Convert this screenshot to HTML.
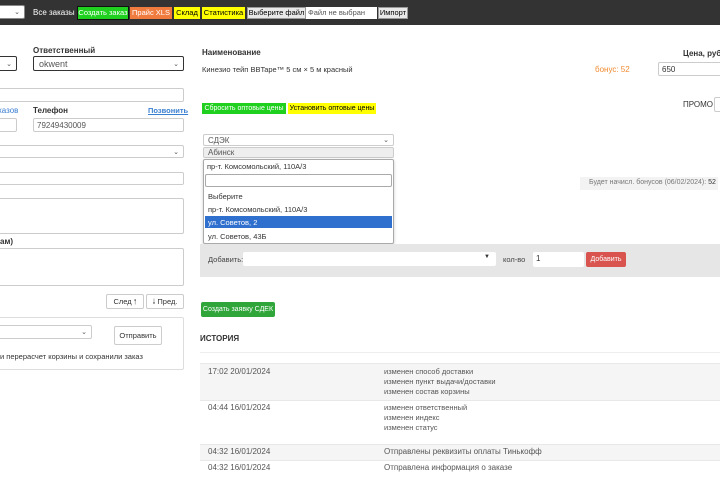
<!DOCTYPE html>
<html><head><meta charset="utf-8"><style>
*{box-sizing:border-box;margin:0;padding:0}
body{width:720px;height:480px;overflow:hidden;background:#fff;font-family:"Liberation Sans","Noto Sans CJK SC",sans-serif;font-size:8px;color:#333;position:relative}
.a{position:absolute;white-space:nowrap}
.bar{left:0;top:0;width:720px;height:25px;background:#333}
.in{position:absolute;background:#fff;border:1px solid #ccc;border-radius:2px}
.b{font-weight:bold;color:#333}
.btn{position:absolute;font-size:7.5px;line-height:12px;text-align:center;white-space:nowrap;overflow:hidden}
.chev{position:absolute;right:4px;top:50%;margin-top:-4px;font-size:7px;color:#555}
.row{position:absolute;left:200px;width:520px}
</style></head><body>
<div class="a bar"></div>
<div class="in" style="left:-4px;top:5px;width:29px;height:14px;border-color:#888"><span class="chev">&#8964;</span></div>
<div class="a" style="left:33px;top:8px;color:#fff">Все заказы</div>
<div class="btn" style="left:77px;top:6px;width:52px;height:14px;background:#1fd01f;color:#fff;border:1px solid #111">Создать заказ</div>
<div class="btn" style="left:130px;top:7px;width:42px;height:12px;background:#f07b3f;color:#fff">Прайс XLS</div>
<div class="btn" style="left:174px;top:7px;width:26px;height:12px;background:#ff0;color:#000">Склад</div>
<div class="btn" style="left:202px;top:7px;width:43px;height:12px;background:#ff0;color:#000">Статистика</div>
<div class="btn" style="left:247px;top:7px;width:59px;height:12px;background:#e8e8e8;color:#000;border:1px solid #999;line-height:10px">Выберите файл</div>
<div class="a" style="left:306px;top:7px;width:71px;height:12px;background:#fff;color:#555;padding-left:2px;line-height:12px;font-size:7.5px">Файл не выбран</div>
<div class="btn" style="left:378px;top:7px;width:30px;height:12px;background:#e8e8e8;color:#000;border:1px solid #999;line-height:10px">Импорт</div>

<!-- left -->
<div class="in" style="left:-4px;top:56px;width:21px;height:15px;border:1px solid #333"><span class="chev">&#8964;</span></div>
<div class="a b" style="left:33px;top:46px">Ответственный</div>
<div class="in" style="left:33px;top:56px;width:151px;height:15px;border:1.5px solid #333;padding:2px 5px;color:#555;font-size:9px">okwent<span class="chev">&#8964;</span></div>
<div class="in" style="left:-4px;top:88px;width:188px;height:14px"></div>
<div class="a" style="left:-10px;top:106px;color:#3a7fd0">заказов</div>
<div class="a b" style="left:33px;top:106px">Телефон</div>
<div class="a" style="left:148px;top:106px;color:#3a7fd0;text-decoration:underline;font-weight:bold;font-size:7.5px">Позвонить</div>
<div class="in" style="left:-4px;top:118px;width:21px;height:14px"></div>
<div class="in" style="left:33px;top:118px;width:151px;height:14px;padding:2px 3px;color:#555">79249430009</div>
<div class="in" style="left:-4px;top:145px;width:188px;height:13px"><span class="chev">&#8964;</span></div>
<div class="in" style="left:-4px;top:172px;width:188px;height:13px"></div>
<div class="in" style="left:-4px;top:198px;width:188px;height:36px"></div>
<div class="a b" style="left:0;top:237px">ам)</div>
<div class="in" style="left:-4px;top:248px;width:188px;height:38px"></div>
<div class="btn in" style="left:106px;top:294px;width:38px;height:15px;line-height:13px">След &#129041;</div>
<div class="btn in" style="left:146px;top:294px;width:38px;height:15px;line-height:13px">&#129043; Пред.</div>
<div class="in" style="left:-4px;top:317px;width:188px;height:53px;border-color:#ddd"></div>
<div class="in" style="left:-4px;top:325px;width:96px;height:14px"><span class="chev">&#8964;</span></div>
<div class="btn in" style="left:114px;top:326px;width:48px;height:19px;line-height:17px">Отправить</div>
<div class="a" style="left:0;top:352px;font-size:7.5px">и перерасчет корзины и сохранили заказ</div>

<!-- right -->
<div class="a b" style="left:202px;top:48px">Наименование</div>
<div class="a" style="left:202px;top:65px;font-size:7.5px">Кинезио тейп BBTape™ 5 см × 5 м красный</div>
<div class="a" style="left:595px;top:65px;color:#f08a30">бонус: 52</div>
<div class="a b" style="left:683px;top:49px">Цена, руб.</div>
<div class="in" style="left:658px;top:62px;width:70px;height:14px;padding:2px 3px">650</div>
<div class="btn" style="left:202px;top:103px;width:84px;height:11px;background:#1fd01f;color:#fff;line-height:11px;font-size:7px">Сбросить оптовые цены</div>
<div class="btn" style="left:288px;top:103px;width:88px;height:11px;background:#ff0;color:#000;line-height:11px;font-size:7px">Установить оптовые цены</div>
<div class="a" style="left:683px;top:100px">ПРОМО</div>
<div class="in" style="left:714px;top:97px;width:20px;height:15px"></div>

<div class="in" style="left:203px;top:134px;width:191px;height:12px;padding:1px 4px;color:#555">СДЭК<span class="chev">&#8964;</span></div>
<div class="in" style="left:203px;top:147px;width:191px;height:11px;padding:0 4px;color:#555;background:#eee;line-height:10px">Абинск</div>
<div class="in" style="left:203px;top:159px;width:191px;height:85px;border-color:#aaa;box-shadow:0 1px 3px rgba(0,0,0,.2)"></div>
<div class="a" style="left:207px;top:162px;font-size:7.5px">пр-т. Комсомольский, 110А/3</div>
<div class="in" style="left:205px;top:174px;width:187px;height:13px;border-color:#aaa"></div>
<div class="a" style="left:208px;top:192px;font-size:7.5px">Выберите</div>
<div class="a" style="left:208px;top:205px;font-size:7.5px">пр-т. Комсомольский, 110А/3</div>
<div class="a" style="left:205px;top:216px;width:187px;height:12px;background:#2f6fce;color:#fff;padding:2px 3px;font-size:7.5px">ул. Советов, 2</div>
<div class="a" style="left:208px;top:232px;font-size:7.5px">ул. Советов, 43Б</div>
<div class="a" style="left:580px;top:177px;width:138px;height:13px;background:#f3f3f3;color:#777;padding:2px 0 0 9px;font-size:7px">Будет начисл. бонусов (06/02/2024): <span style="color:#333">52</span></div>

<div class="a" style="left:200px;top:244px;width:520px;height:33px;background:#e6e6e6"></div>
<div class="a" style="left:208px;top:255px;color:#444;font-size:7.5px">Добавить:</div>
<div class="in" style="left:243px;top:252px;width:253px;height:14px;border:none"><span style="position:absolute;right:6px;top:2px;font-size:6px">&#9660;</span></div>
<div class="a" style="left:503px;top:255px;color:#444;font-size:7.5px">кол-во</div>
<div class="in" style="left:533px;top:252px;width:51px;height:15px;border:none;padding:2px 3px">1</div>
<div class="btn" style="left:586px;top:252px;width:40px;height:15px;background:#d9534f;color:#fff;border-radius:2px;line-height:15px;font-size:7px">Добавить</div>
<div class="btn" style="left:201px;top:302px;width:74px;height:15px;background:#2fa53a;color:#fff;border-radius:2px;line-height:15px;font-size:7px">Создать заявку СДЕК</div>
<div class="a b" style="left:200px;top:334px">ИСТОРИЯ</div>
<div class="row" style="top:352px;height:1px;background:#eee"></div>
<div class="row" style="top:363px;height:37px;background:#f5f5f5;border-top:1px solid #e8e8e8"></div>
<div class="row" style="top:400px;height:44px;border-top:1px solid #e8e8e8"></div>
<div class="row" style="top:444px;height:16px;background:#f5f5f5;border-top:1px solid #e8e8e8"></div>
<div class="row" style="top:460px;height:16px;border-top:1px solid #e8e8e8"></div>
<div class="a" style="left:208px;top:367px;color:#555">17:02 20/01/2024</div>
<div class="a" style="left:384px;top:367px;color:#555;line-height:10px;font-size:7.5px">изменен способ доставки<br>изменен пункт выдачи/доставки<br>изменен состав корзины</div>
<div class="a" style="left:208px;top:403px;color:#555">04:44 16/01/2024</div>
<div class="a" style="left:384px;top:403px;color:#555;line-height:10px;font-size:7.5px">изменен ответственный<br>изменен индекс<br>изменен статус</div>
<div class="a" style="left:208px;top:447px;color:#555">04:32 16/01/2024</div>
<div class="a" style="left:384px;top:447px;color:#555">Отправлены реквизиты оплаты Тинькофф</div>
<div class="a" style="left:208px;top:463px;color:#555">04:32 16/01/2024</div>
<div class="a" style="left:384px;top:463px;color:#555">Отправлена информация о заказе</div>
</body></html>
